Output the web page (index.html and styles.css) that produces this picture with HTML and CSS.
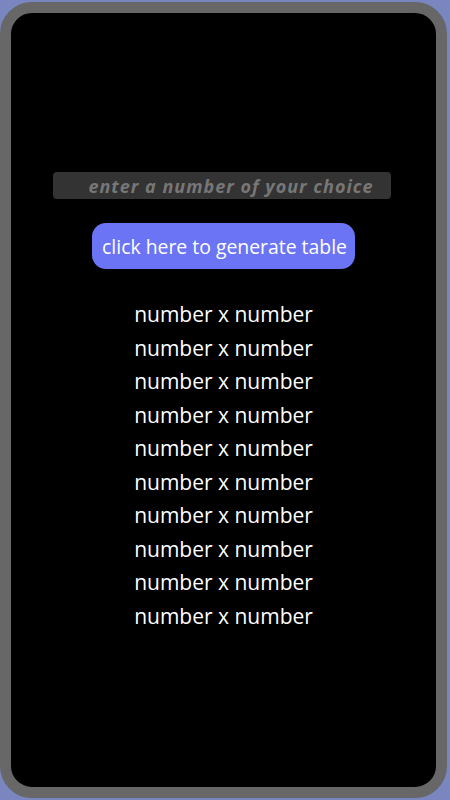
FILE: index.html
```html
<!DOCTYPE html>
<html>
<head>
<meta charset="utf-8">
<link rel="stylesheet" href="styles.css">
</head>
<body>
<div class="phone">
  <div class="screen">
    <input class="num-input" type="text" placeholder="enter a number of your choice">
    <button class="gen-btn">click here to generate table</button>
    <div class="table">
      <div class="row">number x number</div>
      <div class="row">number x number</div>
      <div class="row">number x number</div>
      <div class="row">number x number</div>
      <div class="row">number x number</div>
      <div class="row">number x number</div>
      <div class="row">number x number</div>
      <div class="row">number x number</div>
      <div class="row">number x number</div>
      <div class="row">number x number</div>
    </div>
  </div>
</div>
</body>
</html>
```
FILE: styles.css
```css
html, body {
  margin: 0;
  padding: 0;
  background: #7a86bf;
  height: 100%;
}
body {
  padding: 2px 3px 2px 0;
  box-sizing: border-box;
}
.phone {
  height: 796px;
  width: 447px;
  box-sizing: border-box;
  border: 11px solid #676767;
  border-radius: 32px;
  background: #000;
  overflow: hidden;
}
.screen {
  display: flex;
  flex-direction: column;
  align-items: center;
  padding-top: 159px;
  font-family: "Open Sans", "Noto Sans", sans-serif;
}
.num-input {
  width: 338px;
  height: 27px;
  margin-right: 3px;
  box-sizing: border-box;
  background: #333333;
  border: none;
  border-radius: 4px;
  outline: none;
  padding: 0 0 0 18px;
  text-align: center;
  font-family: "Open Sans", sans-serif;
  font-weight: bold;
  font-style: italic;
  font-size: 18px;
  letter-spacing: 1px;
  color: #777;
}
.num-input::placeholder {
  color: #777;
}
.gen-btn {
  margin-top: 24px;
  width: 263px;
  height: 46px;
  background: #6b74f4;
  border: none;
  border-radius: 14px;
  color: #fff;
  font-family: "Open Sans", sans-serif;
  font-size: 19.4px;
  padding: 0 0 0 2px;
}
.table {
  margin-top: 29px;
  display: flex;
  flex-direction: column;
  align-items: center;
}
.row {
  color: #fff;
  font-size: 21px;
  line-height: 33.55px;
}
```
